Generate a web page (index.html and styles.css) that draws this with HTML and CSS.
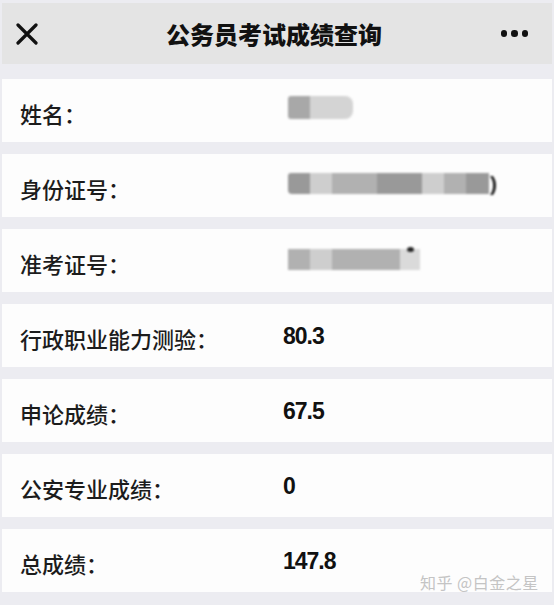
FILE: index.html
```html
<!DOCTYPE html>
<html lang="zh-CN">
<head>
<meta charset="utf-8">
<title>公务员考试成绩查询</title>
<link rel="stylesheet" href="styles.css">
</head>
<body>
<div class="page">
  <header class="topbar">
    <span class="close">
      <svg width="22" height="22" viewBox="0 0 22 22"><path d="M2 2 L20 20 M20 2 L2 20" stroke="#111" stroke-width="3.2" stroke-linecap="round"/></svg>
    </span>
    <h1 class="title">公务员考试成绩查询</h1>
    <span class="more"><i></i><i></i><i></i></span>
  </header>
  <main class="list">
    <div class="row">
      <span class="label">姓名：</span>
      <span class="mask mask-name"><b class="g1"></b><b class="g3"></b></span>
    </div>
    <div class="row">
      <span class="label">身份证号：</span>
      <span class="mask mask-id"><b class="g1"></b><b class="g3"></b><b class="g2"></b><b class="g1"></b><b class="g3"></b><b class="g2"></b><b class="g1"></b><span class="paren">)</span></span>
    </div>
    <div class="row">
      <span class="label">准考证号：</span>
      <span class="mask mask-ticket"><b class="g2"></b><b class="g3"></b><b class="g2"></b><b class="g4"></b><span class="dot"></span></span>
    </div>
    <div class="row">
      <span class="label">行政职业能力测验：</span>
      <span class="value">80.3</span>
    </div>
    <div class="row">
      <span class="label">申论成绩：</span>
      <span class="value">67.5</span>
    </div>
    <div class="row">
      <span class="label">公安专业成绩：</span>
      <span class="value">0</span>
    </div>
    <div class="row">
      <span class="label">总成绩：</span>
      <span class="value">147.8</span>
    </div>
  </main>
  <div class="watermark">知乎 @白金之星</div>
</div>
</body>
</html>
```
FILE: styles.css
```css
* { box-sizing: border-box; }
html, body { margin: 0; padding: 0; }
body {
  width: 554px;
  height: 605px;
  overflow: hidden;
  background: #ececf1;
  font-family: "Noto Sans CJK SC", "Noto Sans", sans-serif;
  color: #1e1e1e;
}
.page {
  position: relative;
  height: 605px;
  padding-top: 3px;
}
.topbar {
  height: 61px;
  background: #e4e4e4;
  display: grid;
  grid-template-columns: 1fr auto 1fr;
  align-items: center;
  padding: 0 20px 0 14px;
  margin: 0 2px;
}
.close {
  width: 22px;
  height: 22px;
  display: flex;
  justify-self: start;
}
.title {
  margin: 0;
  text-align: center;
  font-size: 24px;
  font-weight: 900;
  color: #111;
  line-height: 1;
}
.more {
  display: flex;
  gap: 4px;
  margin-right: 4px;
  justify-self: end;
}
.more i {
  width: 6.5px;
  height: 6.5px;
  border-radius: 50%;
  background: #111;
}
.list {
  padding-top: 15px;
  display: flex;
  flex-direction: column;
  gap: 12px;
}
.row {
  height: 63px;
  background: #fdfdfd;
  margin: 0 2px;
  display: grid;
  grid-template-columns: 263px 1fr;
  align-items: center;
  padding-left: 18px;
}
.label {
  font-size: 22px;
  font-weight: 500;
  color: #1c1c1c;
  padding-top: 4px;
}
.value {
  font-family: "Liberation Sans", Arial, sans-serif;
  font-size: 23px;
  font-weight: 700;
  letter-spacing: -1px;
  color: #111;
  padding-top: 2px;
}
.mask {
  display: flex;
  align-items: center;
  height: 21px;
  filter: blur(0.8px);
  margin-left: 5px;
}
.mask b {
  display: block;
  height: 100%;
  width: 21px;
}
.mask-name { height: 23px; margin-top: -6px; }
.mask-name b.g1 { width: 22px; border-radius: 3px 0 0 3px; background: #a8a8a8; }
.mask-name b.g3 { width: 43px; border-radius: 0 8px 8px 0; background: #d4d4d4; }
.mask-id { margin-top: -4px; }
.mask-id b.g1:first-child { border-radius: 3px 0 0 4px; width: 22px; }
.mask-id b:nth-child(2) { width: 22px; }
.mask-id b:nth-child(3) { width: 45px; }
.mask-id b:nth-child(4) { width: 45px; }
.mask-id b:nth-child(5) { width: 22px; }
.mask-id b:nth-child(6) { width: 22px; }
.mask-id b:nth-child(7) { width: 23px; }
.mask-ticket { margin-top: -2px; }
.mask-ticket b:nth-child(1) { width: 22px; }
.mask-ticket b:nth-child(2) { width: 22px; }
.mask-ticket b:nth-child(3) { width: 68px; }
.mask-ticket b:nth-child(4) { width: 20px; }
.g1 { background: #999; }
.g2 { background: #b1b1b1; }
.g3 { background: #cecece; }
.g4 { background: #dadada; }
.paren {
  font-family: "Liberation Sans", Arial, sans-serif;
  font-weight: 700;
  font-size: 21px;
  color: #111;
  margin-left: 1px;
  line-height: 1;
}
.dot {
  position: relative;
  width: 0;
  height: 100%;
}
.dot::after {
  content: "";
  position: absolute;
  left: -13px;
  top: -2px;
  width: 7px;
  height: 5px;
  border-radius: 50%;
  background: #222;
}
.watermark {
  position: absolute;
  left: 420px;
  top: 570px;
  font-size: 16px;
  color: #c4c4c4;
  letter-spacing: 0.5px;
  white-space: nowrap;
}
```
